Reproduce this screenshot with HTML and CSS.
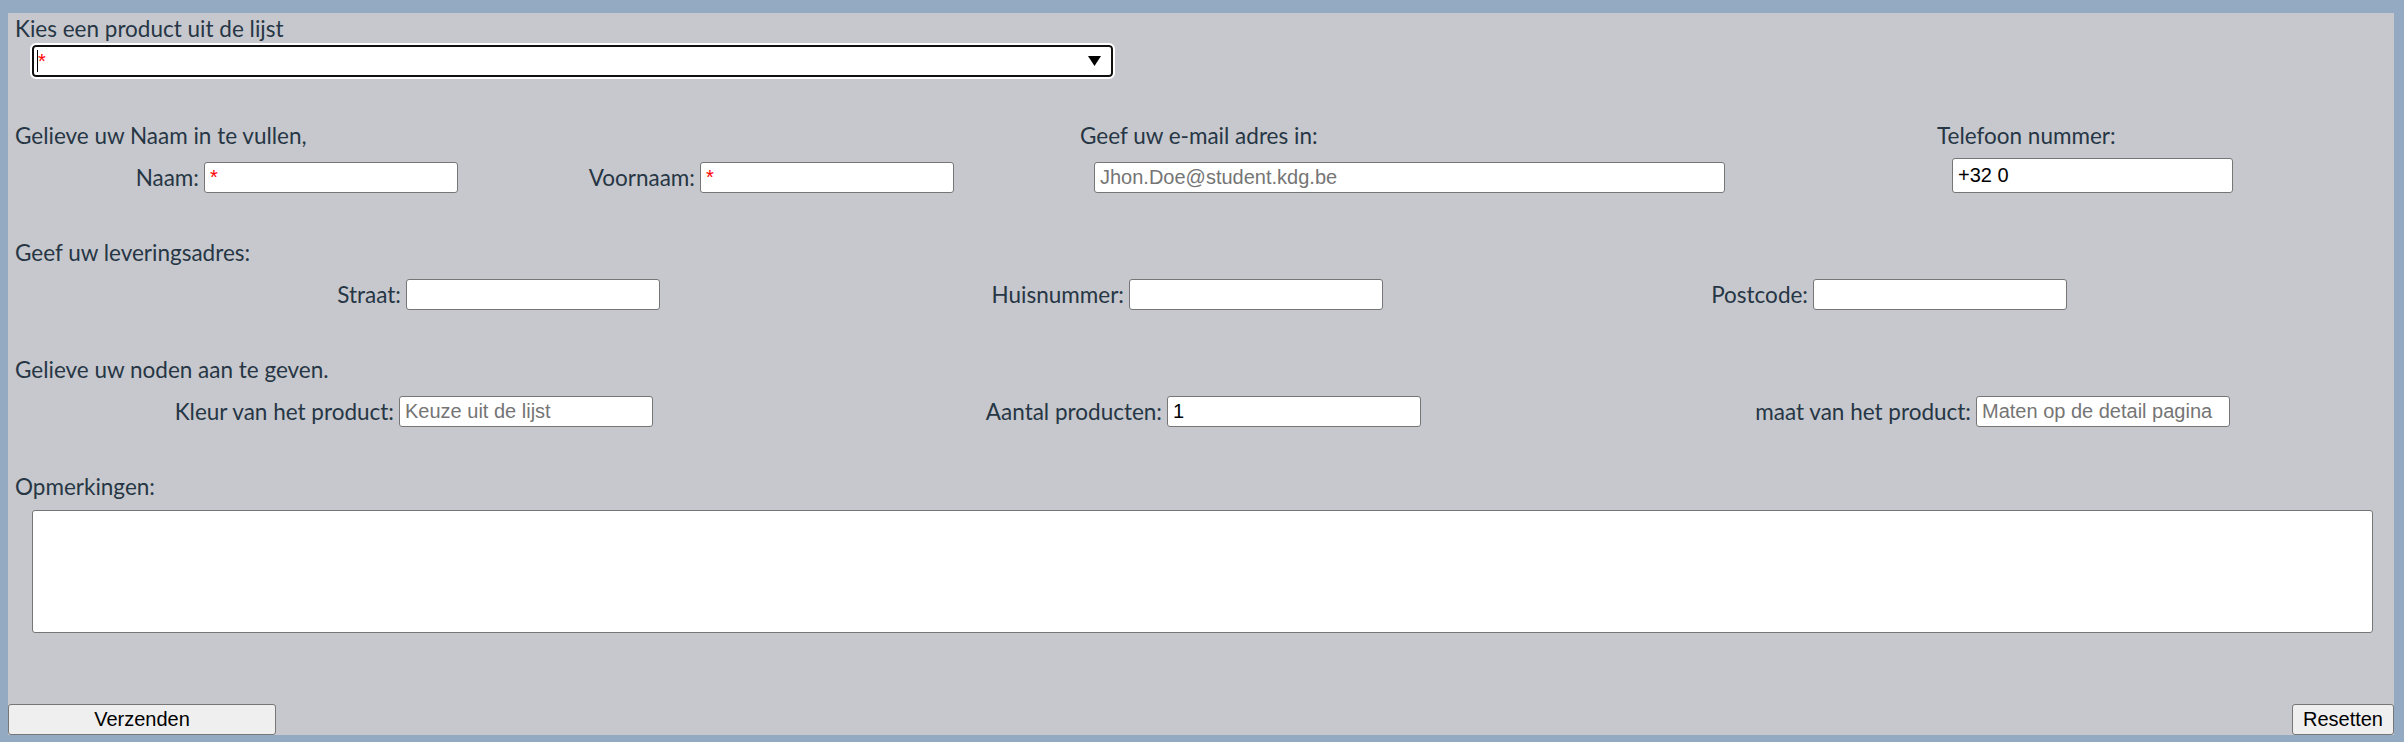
FILE: index.html
```html
<!DOCTYPE html>
<html lang="nl">
<head>
<meta charset="utf-8">
<title>Bestelformulier</title>
<link rel="stylesheet" href="styles.css">
</head>
<body>
<form class="panel">
  <section class="section product">
    <label class="heading" for="product">Kies een product uit de lijst</label>
    <div class="combo">
      <span class="caret"></span>
      <input id="product" class="combo-input" list="producten" placeholder="*">
      <svg class="combo-arrow" width="13" height="10" viewBox="0 0 13 10"><path d="M0 0H13L6.5 10Z" fill="#000"/></svg>
    </div>
  </section>

  <section class="section row-personal">
    <div class="block">
      <p class="heading">Gelieve uw Naam in te vullen,</p>
      <div class="fields fields-name">
        <label class="field-label" for="naam">Naam:</label>
        <input id="naam" class="field req" placeholder="*">
        <label class="field-label" for="voornaam">Voornaam:</label>
        <input id="voornaam" class="field req" placeholder="*">
      </div>
    </div>
    <div class="block">
      <label class="heading" for="email">Geef uw e-mail adres in:</label>
      <input id="email" class="field email" type="email" placeholder="Jhon.Doe@student.kdg.be">
    </div>
    <div class="block">
      <label class="heading" for="tel">Telefoon nummer:</label>
      <input id="tel" class="field tel" type="tel" value="+32 0">
    </div>
  </section>

  <section class="section">
    <p class="heading">Geef uw leveringsadres:</p>
    <div class="fields fields-address">
      <label class="field-label" for="straat">Straat:</label>
      <input id="straat" class="field">
      <label class="field-label" for="huisnummer">Huisnummer:</label>
      <input id="huisnummer" class="field">
      <label class="field-label" for="postcode">Postcode:</label>
      <input id="postcode" class="field">
    </div>
  </section>

  <section class="section">
    <p class="heading">Gelieve uw noden aan te geven.</p>
    <div class="fields fields-needs">
      <label class="field-label" for="kleur">Kleur van het product:</label>
      <input id="kleur" class="field" placeholder="Keuze uit de lijst">
      <label class="field-label" for="aantal">Aantal producten:</label>
      <input id="aantal" class="field" value="1">
      <label class="field-label" for="maat">maat van het product:</label>
      <input id="maat" class="field" placeholder="Maten op de detail pagina">
    </div>
  </section>

  <section class="section row-notes">
    <label class="heading" for="opmerkingen">Opmerkingen:</label>
    <textarea id="opmerkingen" class="notes"></textarea>
  </section>

  <div class="actions">
    <button type="submit" class="btn btn-send">Verzenden</button>
    <button type="reset" class="btn btn-reset">Resetten</button>
  </div>
</form>
</body>
</html>
```
FILE: styles.css
```css
html, body {
  margin: 0;
  height: 742px;
  overflow: hidden;
  background: #94a9c2;
}

.panel {
  margin: 13px 10px 0 8px;
  height: 722px;
  box-sizing: border-box;
  padding-top: 2px;
  background: #c6c8cd;
  display: flex;
  flex-direction: column;
  font-family: Lato, "Open Sans", sans-serif;
  font-size: 22.5px;
  color: #263645;
}

.section {
  padding-left: 7px;
}

.heading {
  display: block;
  margin: 0;
  line-height: 28px;
}

.combo {
  margin: 2px 0 0 17px;
  width: 1081px;
  height: 32px;
  box-sizing: border-box;
  border: 2px solid #101010;
  border-radius: 4px;
  outline: 2px solid #ffffff;
  background: #ffffff;
  display: flex;
  align-items: center;
  padding: 0 10px 0 3px;
}

.caret {
  flex: none;
  width: 1px;
  height: 22px;
  background: #000000;
}

.combo-input {
  flex: 1;
  min-width: 0;
  height: 100%;
  border: 0;
  outline: 0;
  padding: 0;
  background: transparent;
  font: 20px "Liberation Sans", Arial, sans-serif;
}

.combo-input::placeholder {
  color: #ff0000;
}

.combo-arrow {
  flex: none;
}

.row-personal {
  margin-top: 45px;
  display: grid;
  grid-template-columns: 1065px 857px 1fr;
}

.fields {
  margin-top: 12px;
  display: grid;
  column-gap: 5px;
  align-items: center;
}

.fields-name {
  grid-template-columns: 184px 254px 232px 254px;
}

.fields-address {
  grid-template-columns: 386px 254px 459px 254px 420px 254px;
}

.fields-needs {
  grid-template-columns: 379px 254px 504px 254px 545px 254px;
}

.section + .section:not(.row-personal) {
  margin-top: 46px;
}

.field-label {
  justify-self: end;
  line-height: 28px;
  white-space: nowrap;
}

.field {
  display: block;
  width: 254px;
  height: 31px;
  box-sizing: border-box;
  margin: 0;
  border: 1px solid #767676;
  border-radius: 3px;
  padding: 0 5px;
  background: #ffffff;
  color: #000000;
  font: 20px "Liberation Sans", Arial, sans-serif;
}

.field::placeholder {
  color: #757575;
}

.field.req::placeholder {
  color: #ff0000;
}

.email {
  margin: 12px 0 0 14px;
  width: 631px;
}

.tel {
  margin: 8px 0 0 15px;
  width: 281px;
  height: 35px;
}

.section.row-notes {
  margin-top: 48px;
}

.notes {
  display: block;
  margin: 9px 0 0 17px;
  width: 2341px;
  height: 123px;
  box-sizing: border-box;
  border: 1px solid #767676;
  border-radius: 3px;
  background: #ffffff;
  resize: none;
}

.actions {
  margin-top: auto;
  display: flex;
  justify-content: space-between;
}

.btn {
  height: 31px;
  box-sizing: border-box;
  border: 1px solid #767676;
  border-radius: 3px;
  padding: 0 10px;
  background: #efefef;
  color: #000000;
  font: 20px "Liberation Sans", Arial, sans-serif;
}

.btn-send {
  width: 268px;
}
```
